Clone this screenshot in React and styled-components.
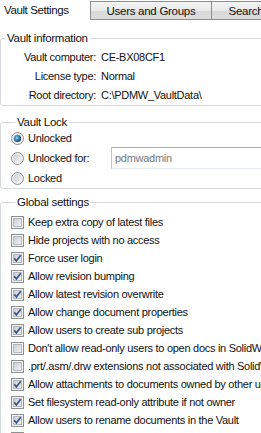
import React from 'react';
import styled, { createGlobalStyle } from 'styled-components';

const GlobalStyle = createGlobalStyle`
  body {
    margin: 0;
    background: #fff;
    font-family: "Liberation Sans", Arial, sans-serif;
    font-size: 11px;
    color: #111;
  }
`

const Page = styled.div`
  width: 261px;
  height: 433px;
  overflow: hidden;
  background: #fff;
  letter-spacing: -0.28px;
`

const TabBar = styled.div`
  display: flex;
  align-items: stretch;
  height: 20px;
`

const ActiveTab = styled.div`
  flex: 0 0 86px;
  padding-left: 4px;
  display: flex;
  align-items: center;
  font-size: 11.5px;
  letter-spacing: -0.4px;
`

const Tab = styled.div`
  flex: 0 0 ${p => p.width}px;
  margin-top: 1px;
  margin-left: ${p => (p.first ? 0 : -1)}px;
  box-sizing: border-box;
  border: 1px solid #8c8e94;
  background: linear-gradient(#f4f4f4, #e9e9e9 50%, #d9d9d9 51%, #dcdcdc);
  display: flex;
  align-items: center;
  justify-content: center;
  font-size: 11.5px;
`

const Group = styled.fieldset`
  margin: ${p => p.top}px 0 0 0;
  padding: ${p => p.pad};
  width: 275px;
  box-sizing: border-box;
  border: 1px solid #d5d9dd;
  border-radius: 3px;
`

const Legend = styled.legend`
  margin-left: 4px;
  padding: 0 2px;
  line-height: 14px;
  font-size: 11.5px;
`

const InfoGrid = styled.div`
  display: grid;
  grid-template-columns: 95px 1fr;
  column-gap: 5px;
  grid-auto-rows: 19px;
  align-items: center;
  white-space: nowrap;
`

const InfoLabel = styled.div`
  text-align: right;
`

const Row = styled.div`
  height: ${p => p.h || 18}px;
  display: flex;
  align-items: center;
  gap: 4px;
  white-space: nowrap;
`

const RadioLabel = styled.span`
  flex: 0 0 79px;
`

const TextBox = styled.div`
  flex: 1;
  height: 22px;
  box-sizing: border-box;
  border: 1px solid #e3e9ef;
  border-top-color: #abadb3;
  border-left-color: #c0c3c8;
  display: flex;
  align-items: center;
  padding-left: 3px;
  color: #7a7a7a;
`

const Check = ({ on }) => (
  <svg width="13" height="13" viewBox="0 0 13 13" style={{ flexShrink: 0 }}>
    <defs>
      <linearGradient id="cbg" x1="0" y1="0" x2="1" y2="1">
        <stop offset="0" stopColor="#c6cad0" />
        <stop offset="1" stopColor="#f4f4f4" />
      </linearGradient>
    </defs>
    <rect x="0.5" y="0.5" width="12" height="12" fill="#f5f5f5" stroke="#8e8f8f" />
    <rect x="2.5" y="2.5" width="8" height="8" fill="url(#cbg)" stroke="#b4b8be" />
    {on && (
      <path d="M3.3 6.4 L5.4 8.8 L9.8 3.2" fill="none" stroke="#3b5696" strokeWidth="1.7" />
    )}
  </svg>
)

const Radio = ({ on }) => (
  <svg width="13" height="13" viewBox="0 0 13 13" style={{ flexShrink: 0 }}>
    <defs>
      <linearGradient id="rbg" x1="0" y1="0" x2="1" y2="1">
        <stop offset="0" stopColor="#c9cdd2" />
        <stop offset="1" stopColor="#f6f6f6" />
      </linearGradient>
      <radialGradient id="rdot" cx="0.4" cy="0.4" r="0.6">
        <stop offset="0" stopColor="#a9dcf5" />
        <stop offset="0.45" stopColor="#3d8fc4" />
        <stop offset="1" stopColor="#163f6b" />
      </radialGradient>
    </defs>
    <circle cx="6.5" cy="6.5" r="6" fill="#f3f3f3" stroke="#8e8f8f" />
    <circle cx="6.5" cy="6.5" r="4.3" fill="url(#rbg)" />
    {on && <circle cx="6.5" cy="6.5" r="3.6" fill="url(#rdot)" />}
  </svg>
)

const settings = [
  ['Keep extra copy of latest files', false],
  ['Hide projects with no access', false],
  ['Force user login', true],
  ['Allow revision bumping', true],
  ['Allow latest revision overwrite', true],
  ['Allow change document properties', true],
  ['Allow users to create sub projects', true],
  ["Don't allow read-only users to open docs in SolidWorks", false],
  ['.prt/.asm/.drw extensions not associated with SolidWorks', false],
  ['Allow attachments to documents owned by other users', true],
  ['Set filesystem read-only attribute if not owner', true],
  ['Allow users to rename documents in the Vault', true],
  ['Enable performance email', false],
]

export default function App() {
  return (
    <Page>
      <GlobalStyle />
      <TabBar>
        <ActiveTab>Vault Settings</ActiveTab>
        <Tab first width={122}>Users and Groups</Tab>
        <Tab width={70}>Search</Tab>
      </TabBar>

      <Group top={11} pad="2px 0 1px 0">
        <Legend>Vault information</Legend>
        <InfoGrid>
          <InfoLabel>Vault computer:</InfoLabel>
          <div>CE-BX08CF1</div>
          <InfoLabel>License type:</InfoLabel>
          <div>Normal</div>
          <InfoLabel>Root directory:</InfoLabel>
          <div>C:\PDMW_VaultData\</div>
        </InfoGrid>
      </Group>

      <Group top={9} pad="0 0 1px 10px">
        <Legend>Vault Lock</Legend>
        <Row><Radio on /><span>Unlocked</span></Row>
        <Row h={22}>
          <Radio />
          <RadioLabel>Unlocked for:</RadioLabel>
          <TextBox>pdmwadmin</TextBox>
        </Row>
        <Row><Radio /><span>Locked</span></Row>
      </Group>

      <Group top={6} pad="4px 0 0 10px">
        <Legend>Global settings</Legend>
        {settings.map(([text, on]) => (
          <Row key={text}><Check on={on} /><span>{text}</span></Row>
        ))}
      </Group>
    </Page>
  );
}
